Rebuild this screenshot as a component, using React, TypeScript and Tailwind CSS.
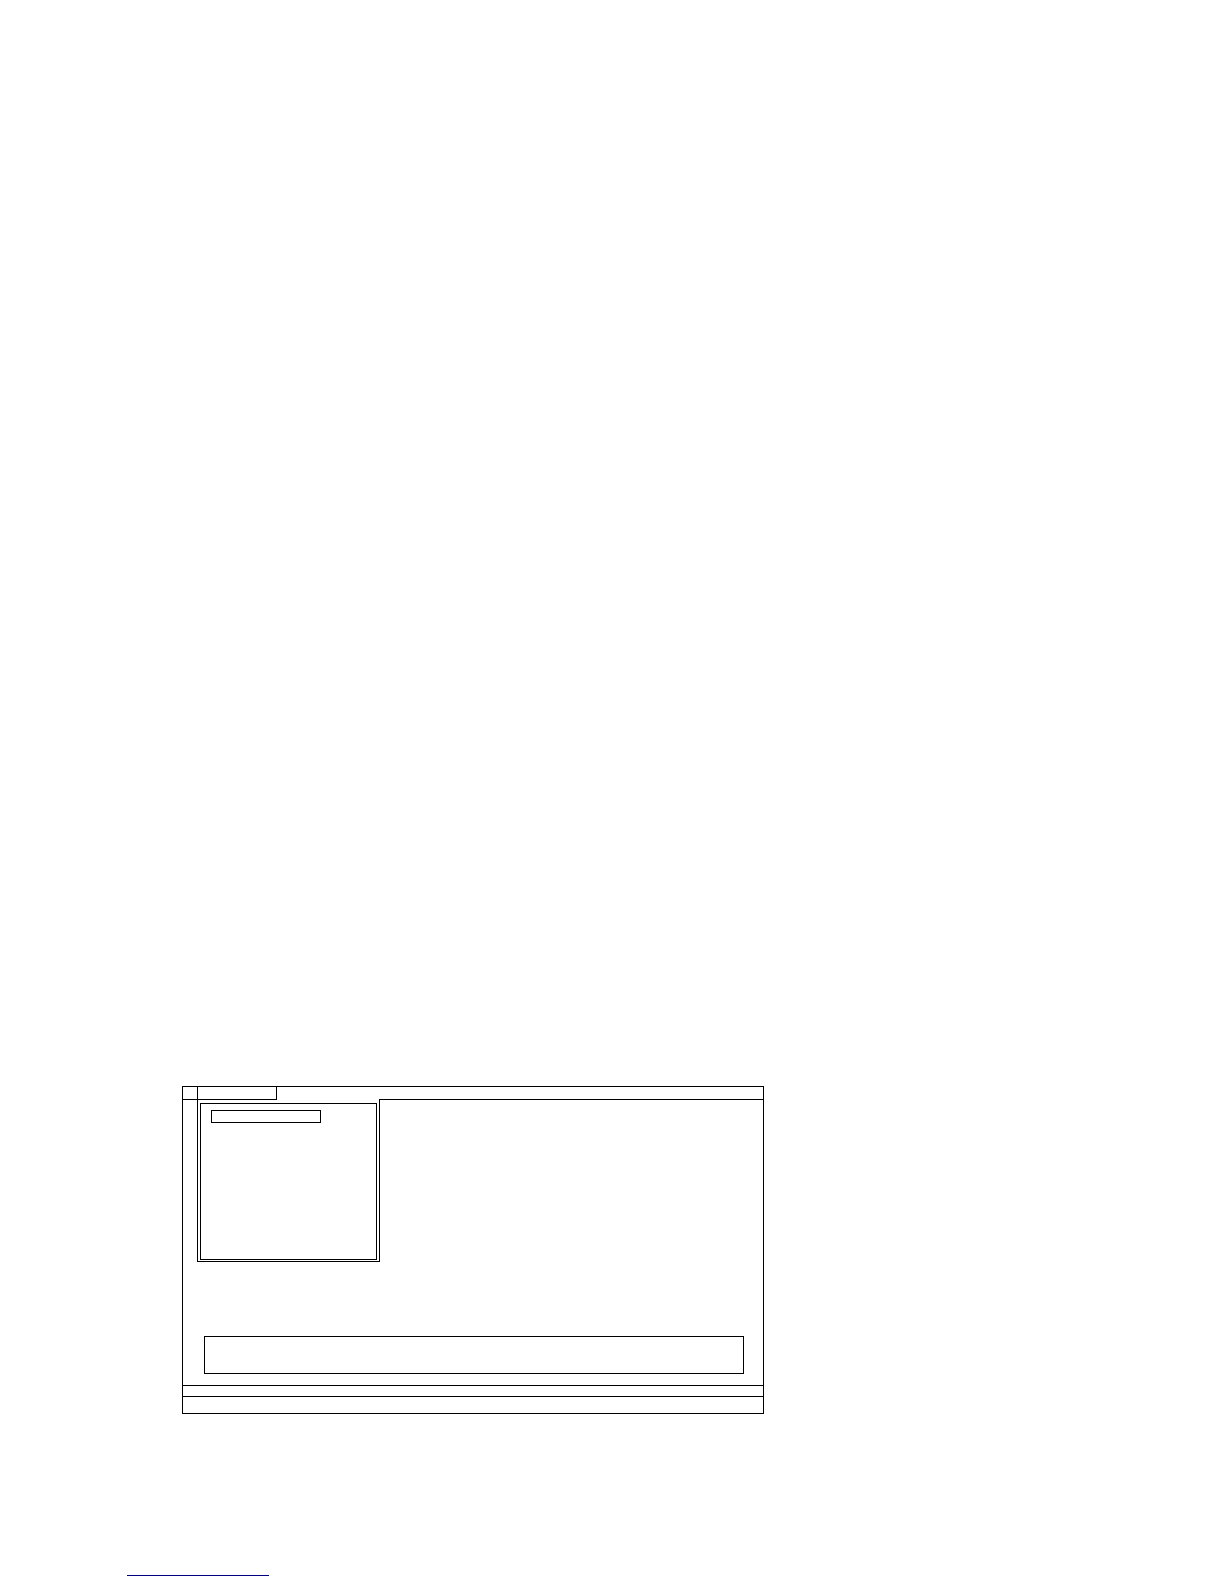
const MenuBar = () => {
  return (
    <div className="flex h-[13px]">
      <div className="w-[15px] shrink-0 border-r border-b border-black" />
      <div className="w-[79px] shrink-0 border-r border-b border-black" />
      {/* No rule here, the open menu continues upwards into the bar */}
      <div className="w-[102px] shrink-0" />
      <div className="flex-1 border-b border-black" />
    </div>
  )
}

const OpenMenu = () => {
  return (
    <div className="ml-[14px] w-[183px] border-x border-b border-black px-[2px] pt-[3px] pb-px">
      <div className="h-[157px] border border-black px-[10px] pt-[6px]">
        <div className="h-[13px] w-[110px] border border-black" />
      </div>
    </div>
  )
}

const WindowFrame = () => {
  return (
    <section className="max-w-[582px] border border-black">
      <MenuBar />
      <OpenMenu />

      {/* Message area */}

      <div className="pt-[74px] pr-[19px] pb-[11px] pl-[21px]">
        <div className="h-[38px] border border-black" />
      </div>

      {/* Status lines */}

      <div className="h-[11px] border-t border-black" />
      <div className="h-[17px] border-t border-black" />
    </section>
  )
}

export default function App() {
  return (
    <main className="flex min-h-screen flex-col justify-end bg-white pb-2">
      <div className="pl-[182px]">
        <WindowFrame />
      </div>

      <hr className="mt-[161px] ml-[127px] w-[142px] border-t border-[#000080]" />
    </main>
  )
}
